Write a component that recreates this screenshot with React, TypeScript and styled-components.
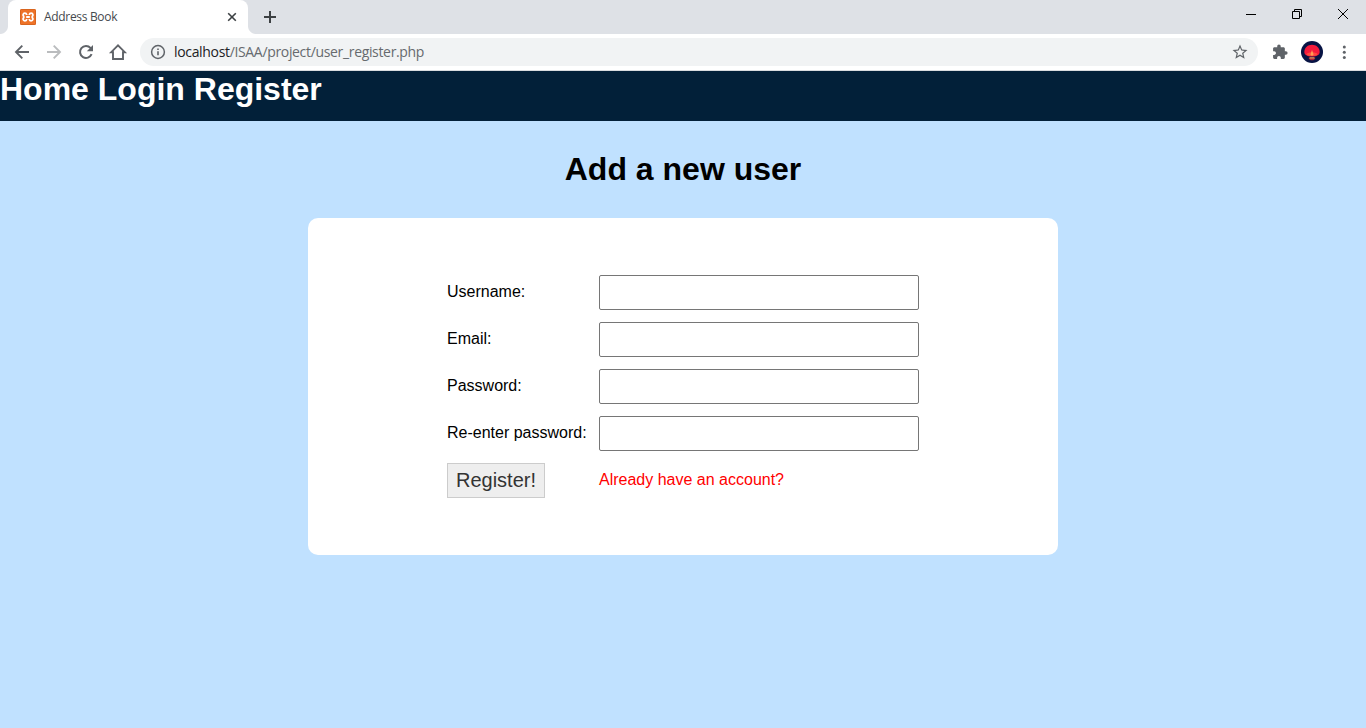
import React from "react";
import styled, { createGlobalStyle } from "styled-components";

const GlobalStyle = createGlobalStyle`
  * { box-sizing: border-box; }
  html, body { margin: 0; padding: 0; }
  body { font-family: "Liberation Sans", Arial, sans-serif; font-size: 16px; color: #000; }
`;

const Window = styled.div`
  display: flex;
  flex-direction: column;
  width: 100%;
  height: 100vh;
  overflow: hidden;
  background: #c0e1ff;
`;

const TabStrip = styled.div`
  display: flex;
  height: 34px;
  flex: none;
  background: #dee1e6;
`;

const Tab = styled.div`
  position: relative;
  display: flex;
  align-items: center;
  width: 240px;
  height: 34px;
  margin-left: 8px;
  padding: 0 10px 0 12px;
  background: #fff;
  border-radius: 8px 8px 0 0;
  &::before,
  &::after {
    content: "";
    position: absolute;
    bottom: 0;
    width: 8px;
    height: 8px;
  }
  &::before {
    left: -8px;
    background: radial-gradient(circle at 0 0, transparent 7.5px, #fff 8.5px);
  }
  &::after {
    right: -8px;
    background: radial-gradient(circle at 100% 0, transparent 7.5px, #fff 8.5px);
  }
`;

const TabTitle = styled.span`
  flex: 1;
  margin-left: 8px;
  font: 12px/16px "Open Sans", "Noto Sans", sans-serif;
  letter-spacing: -0.32px;
  color: #45494d;
`;

const NewTab = styled.div`
  display: flex;
  align-items: center;
  margin-left: 14px;
`;

const WindowControls = styled.div`
  display: flex;
  margin-left: auto;
  height: 28px;
`;

const ControlButton = styled.div`
  display: flex;
  align-items: center;
  justify-content: center;
  width: 46px;
`;

const Toolbar = styled.div`
  display: flex;
  align-items: center;
  flex: none;
  height: 37px;
  padding: 0 13px 0 12px;
  background: #fff;
  border-bottom: 1px solid #d9dcdf;
`;

const NavIcons = styled.div`
  display: flex;
  gap: 12px;
`;

const AddressBar = styled.div`
  display: flex;
  align-items: center;
  flex: 1;
  height: 28px;
  margin: 0 13px 0 12px;
  padding: 0 9px 0 10px;
  border-radius: 14px;
  background: #f1f3f4;
`;

const Url = styled.span`
  flex: 1;
  margin-left: 8px;
  font: 14px/20px "Open Sans", "Noto Sans", sans-serif;
  letter-spacing: -0.335px;
  color: #666a6e;
`;

const Host = styled.span`
  color: #202124;
`;

const ToolIcons = styled.div`
  display: flex;
  align-items: center;
  gap: 11px;
`;

const Icon = styled.svg`
  display: block;
  flex: none;
`;

const SiteNav = styled.nav`
  flex: none;
  height: 50px;
  background: #022039;
  color: #fff;
  font-size: 32px;
  line-height: 36px;
  font-weight: bold;
`;

const NavLink = styled.a`
  color: inherit;
  text-decoration: none;
`;

const Title = styled.h1`
  margin: 30px 0 31px;
  text-align: center;
  font-size: 32px;
  line-height: 36px;
`;

const Card = styled.main`
  align-self: center;
  display: flex;
  justify-content: center;
  width: 750px;
  height: 337px;
  padding-top: 57px;
  border-radius: 10px;
  background: #fff;
`;

const Form = styled.form`
  display: grid;
  grid-template-columns: 140px 320px;
  grid-auto-rows: 35px;
  gap: 12px;
  align-content: start;
`;

const Label = styled.label`
  line-height: 18px;
  padding-top: 8px;
`;

const Field = styled.input`
  width: 320px;
  height: 35px;
  border: 1px solid #767676;
  border-radius: 2px;
  background: #fff;
  outline: none;
`;

const Submit = styled.button`
  width: 98px;
  height: 35px;
  padding: 0;
  border: 1px solid #ccc;
  border-radius: 0;
  background: #eee;
  color: #333;
  font: 20px/33px "Liberation Sans", Arial, sans-serif;
`;

const AccountLink = styled.a`
  padding-top: 8px;
  line-height: 18px;
  color: #f00;
  text-decoration: none;
`;

const fields = [
  { label: "Username:", type: "text" },
  { label: "Email:", type: "text" },
  { label: "Password:", type: "password" },
  { label: "Re-enter password:", type: "password" },
];

export default function App() {
  return (
    <Window>
      <GlobalStyle />
      <TabStrip>
        <Tab>
          <Icon width="16" height="16" viewBox="0 0 16 16">
            <rect width="16" height="16" rx="1.5" fill="#ee7328" />
            <rect x=".5" y=".5" width="15" height="15" rx="1" fill="none" stroke="#d8651f" />
            <path
              d="M6.600 6V5.400C6.200 3.800 3.500 3.700 3.100 5.600c-.2 1 .7 1.600.7 2.400s-.9 1.400-.7 2.400c.4 1.900 3.100 1.800 3.500.2V10M9.400 6V5.400c.4-1.600 3.100-1.700 3.500.2.2 1-.7 1.600-.7 2.400s.9 1.400.7 2.400c-.4 1.900-3.100 1.800-3.500.2V10M6.200 8h3.600"
              fill="none"
              stroke="#fff"
              strokeWidth="1.800"
            />
          </Icon>
          <TabTitle>Address Book</TabTitle>
          <Icon width="12" height="12" viewBox="0 0 12 12">
            <path d="M2.200 2.200l7.600 7.600M9.800 2.200L2.200 9.800" stroke="#3c4043" strokeWidth="1.600" />
          </Icon>
        </Tab>
        <NewTab>
          <Icon width="16" height="16" viewBox="0 0 16 16">
            <path d="M8 2v12M2 8h12" stroke="#3c4043" strokeWidth="2" />
          </Icon>
        </NewTab>
        <WindowControls>
          <ControlButton>
            <Icon width="10" height="10" viewBox="0 0 10 10">
              <path d="M0 5.500h10" stroke="#000" />
            </Icon>
          </ControlButton>
          <ControlButton>
            <Icon width="10" height="10" viewBox="0 0 10 10">
              <path d="M.5 2.500h7v7h-7zM2.500 2.500v-2h7v7h-2" fill="none" stroke="#000" />
            </Icon>
          </ControlButton>
          <ControlButton>
            <Icon width="10" height="10" viewBox="0 0 10 10">
              <path d="M0 0l10 10M10 0L0 10" stroke="#000" />
            </Icon>
          </ControlButton>
        </WindowControls>
      </TabStrip>

      <Toolbar>
        <NavIcons>
          <Icon width="20" height="20" viewBox="0 0 20 20">
            <path d="M17 10H4.500M10.300 3.700L4 10l6.300 6.300" fill="none" stroke="#5f6368" strokeWidth="1.900" />
          </Icon>
          <Icon width="20" height="20" viewBox="0 0 20 20">
            <path d="M3 10h12.500M9.700 3.700L16 10l-6.300 6.300" fill="none" stroke="#babcbe" strokeWidth="1.900" />
          </Icon>
          <Icon width="20" height="20" viewBox="0 0 20 20">
            <path d="M15.600 12.200A6 6 0 1 1 14.500 5.900L16 7.400" fill="none" stroke="#5f6368" strokeWidth="2" />
            <path d="M17 3v6.200h-6.200z" fill="#5f6368" />
          </Icon>
          <Icon width="20" height="20" viewBox="0 0 20 20">
            <path d="M3.200 10.200H5V17h10v-6.800h1.800L10 3.400z" fill="none" stroke="#5f6368" strokeWidth="1.900" />
          </Icon>
        </NavIcons>
        <AddressBar>
          <Icon width="16" height="16" viewBox="0 0 16 16">
            <circle cx="8" cy="8" r="6.400" fill="none" stroke="#5f6368" strokeWidth="1.500" />
            <path d="M8 7.200v4M8 4.400v1.600" stroke="#5f6368" strokeWidth="1.600" />
          </Icon>
          <Url>
            <Host>localhost</Host>/ISAA/project/user_register.php
          </Url>
          <Icon width="18" height="18" viewBox="0 0 24 24">
            <path
              fill="#5f6368"
              d="M22 9.240l-7.190-.620L12 2 9.190 8.630 2 9.240l5.460 4.730L5.820 21 12 17.270 18.180 21l-1.630-7.030L22 9.240zM12 15.400l-3.760 2.270 1-4.280-3.320-2.880 4.380-.380L12 6.100l1.710 4.040 4.380.380-3.320 2.880 1 4.280L12 15.400z"
            />
          </Icon>
        </AddressBar>
        <ToolIcons>
          <Icon width="18" height="18" viewBox="-1 -1 26 26">
            <path
              fill="#5f6368"
              d="M20.500 11H19V7c0-1.100-.900-2-2-2h-4V3.500a2.500 2.500 0 0 0-5 0V5H4c-1.100 0-1.990.900-1.990 2v3.800H3.500c1.490 0 2.700 1.210 2.700 2.700s-1.210 2.700-2.700 2.700H2V20c0 1.100.900 2 2 2h3.800v-1.500c0-1.490 1.210-2.700 2.700-2.700s2.700 1.210 2.700 2.700V22H17c1.100 0 2-.900 2-2v-4h1.500a2.500 2.500 0 0 0 0-5z"
            />
          </Icon>
          <Icon width="24" height="24" viewBox="0 0 24 24">
            <circle cx="12" cy="12" r="11" fill="#071344" />
            <path d="M4.300 12C4.300 7.500 8 4.700 12 4.700s7.700 2.800 7.700 7.300c0 2.800-3 4.600-7.700 4.600S4.300 14.800 4.300 12z" fill="#f51a3c" />
            <path d="M6 14.300c1.800-1.500 3.800-2 6-2s4.200.5 6 2c-1.700 1.300-3.700 1.800-6 1.800s-4.300-.5-6-1.800z" fill="#ff4a3f" />
            <path d="M12 10l1.600 4.500L12 16l-1.600-1.500z" fill="#ff9d54" />
            <path d="M8.500 17.700h7c-.6 1.700-1.700 2.600-3.500 2.600s-2.900-.900-3.500-2.600z" fill="#a52735" />
            <path d="M9.500 17.900h5" stroke="#ffb467" />
          </Icon>
          <Icon width="18" height="20" viewBox="0 0 18 20">
            <g fill="#5f6368">
              <circle cx="9.300" cy="5" r="1.500" />
              <circle cx="9.300" cy="10.200" r="1.500" />
              <circle cx="9.300" cy="15.400" r="1.500" />
            </g>
          </Icon>
        </ToolIcons>
      </Toolbar>

      <SiteNav>
        <NavLink>Home</NavLink> <NavLink>Login</NavLink> <NavLink>Register</NavLink>
      </SiteNav>
      <Title>Add a new user</Title>
      <Card>
        <Form>
          {fields.map((field) => (
            <React.Fragment key={field.label}>
              <Label>{field.label}</Label>
              <Field type={field.type} />
            </React.Fragment>
          ))}
          <Submit type="button">Register!</Submit>
          <AccountLink>Already have an account?</AccountLink>
        </Form>
      </Card>
    </Window>
  );
}
